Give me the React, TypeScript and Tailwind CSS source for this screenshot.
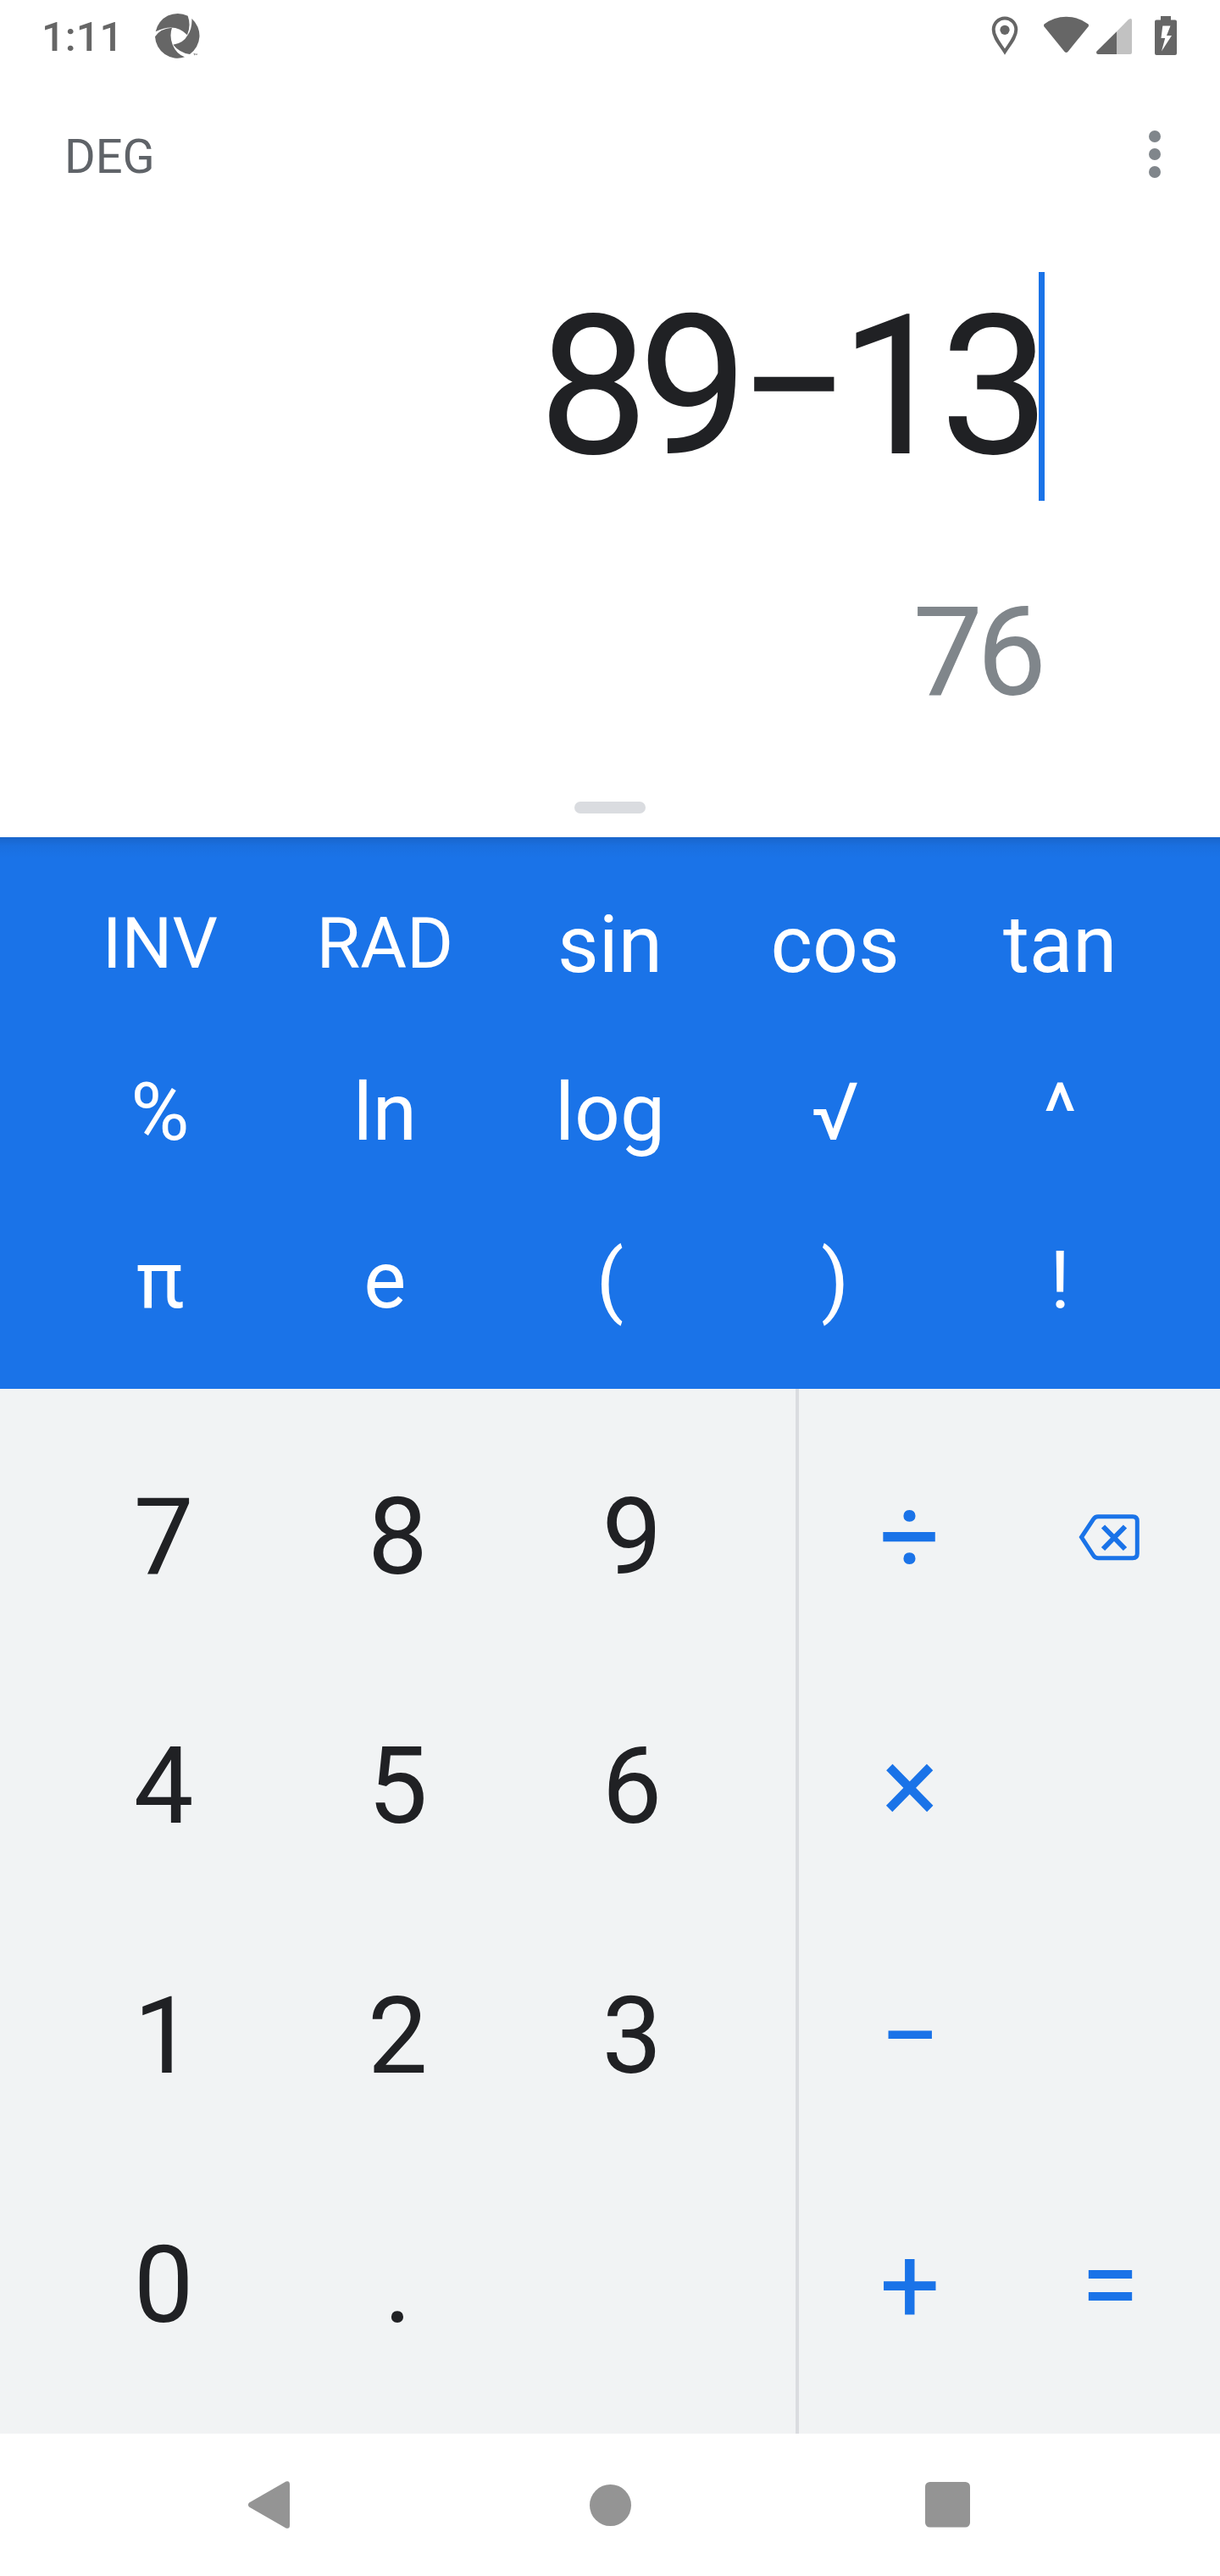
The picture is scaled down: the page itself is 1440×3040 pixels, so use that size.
import React from "react";

const advanced = [
  ["INV", "RAD", "sin", "cos", "tan"],
  ["%", "ln", "log", "√", "^"],
  ["π", "e", "(", ")", "!"],
];
const digits = ["7", "8", "9", "4", "5", "6", "1", "2", "3", "0", ".", ""];
const operators = ["÷", "del", "×", "", "−", "", "+", "="];

function ApertureIcon() {
  return (
    <svg viewBox="546 45 165 165" className="ml-[37px] h-[55px] w-[55px] fill-[#666]">
      <path d="M551 112A80 80 0 0 1 665 56Q677 90 663 124Q620 78 551 112Z" />
      <path d="M679 66A80 80 0 0 1 672 192Q636 187 613 158Q648 155 665 124Q681 100 679 66Z" />
      <path d="M549 130Q568 100 609 98Q599 128 611 158Q624 190 654 202A80 80 0 0 1 549 130Z" />
      <path d="M685 190h6v1.500h-2v4h-2v-4h-2zM692 195v-6l3 3 3-3v6h-1.500v-3l-1.500 2-1.500-2v3z" />
    </svg>
  );
}

function StatusBar() {
  return (
    <div className="flex h-[84px] items-center justify-between pl-[49px] pr-[51px]">
      <div className="flex items-center">
        <span className="mt-1 text-[49px] font-medium leading-[58px] text-[#666]">1:11</span>
        <ApertureIcon />
      </div>
      <div className="flex items-center">
        <svg viewBox="1170 19 32 46" className="h-[46px] w-8">
          <path
            d="M1186 61C1181 53 1172.700 44 1172.700 35A13.300 13.600 0 0 1 1199.300 35C1199.300 44 1191 53 1186 61Z"
            fill="none"
            stroke="#666"
            strokeWidth="4"
          />
          <circle cx="1186" cy="35.300" r="5.600" fill="#666" />
        </svg>
        <svg viewBox="1231 19 55 46" className="ml-[29px] h-[46px] w-[55px] fill-[#666]">
          <path d="M1232.500 28.500Q1244 19.700 1258.500 19.700T1284.500 28.500Q1285.500 29.800 1284.500 31.500L1260.500 61Q1258.500 63 1256.500 61L1232.500 31.500Q1231.500 29.800 1232.500 28.500Z" />
        </svg>
        <svg viewBox="1293 19 44 46" className="ml-[7px] h-[46px] w-11">
          <path d="M1318 37.300L1332 23Q1336 20.500 1336 24V62Q1336 64 1334 64H1318Z" fill="#c2c2c2" />
          <path d="M1318 37.300V64H1296Q1293 63 1294.500 60.500Z" fill="#666" />
        </svg>
        <svg viewBox="1363 19 26 46" className="ml-[26px] h-[46px] w-[26px] fill-[#666]">
          <path
            fillRule="evenodd"
            d="M1370 19h12v4.500h5q2 0 2 2V63q0 2-2 2h-22q-2 0-2-2V25.500q0-2 2-2h5zM1372.300 30.500L1370.500 45h4.700L1371 60.500 1383 42h-6l4.500-11.500z"
          />
        </svg>
      </div>
    </div>
  );
}

function Key({ label }: { label: string }) {
  if (label === "del") {
    return (
      <svg viewBox="1273 1787 73 55" className="mr-0.5 h-[55px] w-[73px]" fill="none" stroke="#1a73e8">
        <path
          d="M1276.500 1814L1290.500 1793Q1292.500 1789.800 1296 1789.800H1337Q1342.300 1789.800 1342.300 1795V1833.500Q1342.300 1838.700 1337 1838.700H1296Q1292.500 1838.700 1290.500 1835.500Z"
          strokeWidth="5"
        />
        <path d="M1302 1801.500L1328 1828M1328 1801.500L1302 1828" strokeWidth="6" />
      </svg>
    );
  }
  return <span>{label}</span>;
}

export default function App() {
  return (
    <div className="flex h-[3040px] w-[1440px] flex-col overflow-hidden bg-white font-['Roboto',sans-serif]">
      <StatusBar />

      <div className="flex h-[200px] items-start justify-between pl-[76px] pr-[70px] pt-[67px]">
        <span className="mt-px text-[56px] leading-[66px] text-[#5f6368]">DEG</span>
        <svg viewBox="0 0 14 56" className="mt-[3px] h-14 w-[14px] fill-[#80868b]">
          <circle cx="7" cy="7" r="7" />
          <circle cx="7" cy="28" r="7" />
          <circle cx="7" cy="49" r="7" />
        </svg>
      </div>

      <div className="mt-[37px] flex h-[270px] justify-end pr-[207px]">
        <span className="text-[231px] leading-[270px] tracking-[-12px] text-[#202124]">89−13</span>
        <div className="-ml-px w-[7px] bg-[#1a73e8]" />
      </div>
      <div className="mt-[93px] flex h-[172px] justify-end pr-[212px]">
        <span className="text-[147px] leading-[172px] tracking-[-0.05em] text-[#80868b]">76</span>
      </div>
      <div className="mx-auto mt-[90px] h-[14px] w-[84px] rounded-full bg-[#dadce0]" />

      <div className="mt-7 h-[651px] bg-[#1a73e8] bg-[linear-gradient(to_bottom,#1965cb_0px,#1a6fdf_10px,#1a73e8_24px)] px-14 pb-[29px] pt-[27px] text-white">
        <div className="grid h-full grid-cols-5 grid-rows-3">
          {advanced.flat().map((k) => (
            <div
              key={k}
              className={
                k === "INV" || k === "RAD"
                  ? "flex items-center justify-center text-[84px] leading-[98px]"
                  : "flex items-center justify-center text-[94.5px] leading-[111px]"
              }
            >
              {k}
            </div>
          ))}
        </div>
      </div>

      <div className="flex h-[1233px] bg-[#f1f3f4] text-[126px] leading-[148px]">
        <div className="grid h-full w-[939px] grid-cols-3 grid-rows-4 py-7 pl-[55px] pr-[55px] text-[#202124]">
          {digits.map((k, i) => (
            <div key={i} className="flex items-center justify-center">
              <Key label={k} />
            </div>
          ))}
        </div>
        <div className="w-1 bg-[#dadce0]" />
        <div className="grid h-full flex-1 grid-cols-2 grid-rows-4 py-7 pl-[13px] pr-3 text-[#1a73e8]">
          {operators.map((k, i) => (
            <div key={i} className="flex items-center justify-center">
              <Key label={k} />
            </div>
          ))}
        </div>
      </div>

      <div className="flex flex-1 items-center fill-[#949494] pl-[292px]">
        <svg viewBox="292 2927 51 58" className="h-[58px] w-[51px]">
          <path d="M294 2953.500L337.500 2928.500Q342 2927 342 2932V2980Q342 2985 337.500 2983.500L294 2958.500Q291.800 2956 294 2953.500Z" />
        </svg>
        <svg viewBox="0 0 50 50" className="ml-[353px] h-[50px] w-[50px]">
          <circle cx="24.500" cy="25.500" r="24.500" />
        </svg>
        <svg viewBox="0 0 53 54" className="ml-[346px] h-[54px] w-[53px]">
          <rect width="53" height="53.500" rx="5.500" />
        </svg>
      </div>
    </div>
  );
}
